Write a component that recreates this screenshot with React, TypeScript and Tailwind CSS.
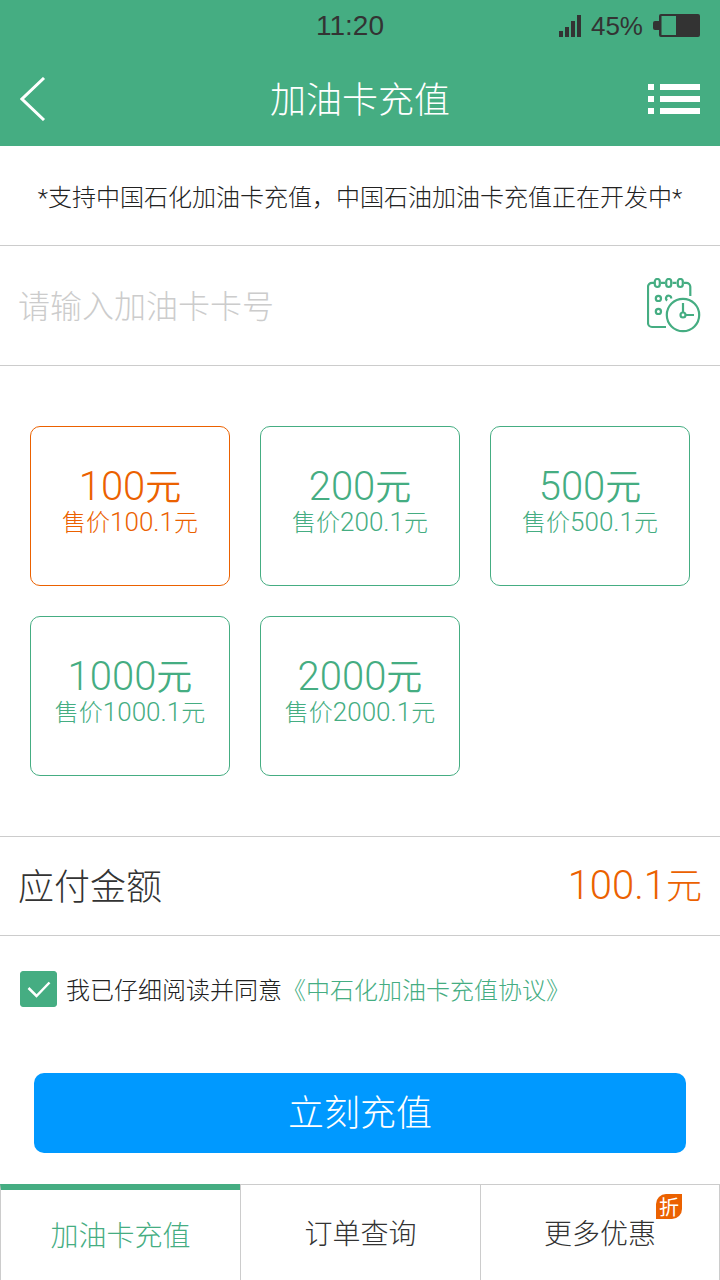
import { useState } from 'react'
import clsx from 'clsx'

const amounts = [100, 200, 500, 1000, 2000]

const tabs = [
  { id: 'recharge', label: '加油卡充值' },
  { id: 'orders', label: '订单查询' },
  { id: 'offers', label: '更多优惠', badge: '折' },
]

function StatusBar() {
  return (
    <div className="grid h-[51px] grid-cols-3 items-center pr-5 font-['Liberation_Sans',sans-serif] text-[28px] leading-8 text-[#333]">
      <span className="col-start-2 text-center">11:20</span>
      <div className="flex items-center justify-end gap-[10px]">
        <svg width="22" height="22" viewBox="0 0 22 22" fill="currentColor" aria-hidden="true">
          <path d="M0 16h4v6H0zM6 12h4v10H6zM12 6h4v16h-4zM18 0h4v22h-4z" />
        </svg>
        <span className="text-[26px]">45%</span>
        <svg width="47" height="23" viewBox="0 0 47 23" fill="currentColor" aria-hidden="true">
          <path d="M2 7h4v9H2a2 2 0 0 1-2-2V9a2 2 0 0 1 2-2z" />
          <path
            fillRule="evenodd"
            d="M8 0h37a2 2 0 0 1 2 2v19a2 2 0 0 1-2 2H8a2 2 0 0 1-2-2V2a2 2 0 0 1 2-2zm.5 2v19H23V2z"
          />
        </svg>
      </div>
    </div>
  )
}

function CalendarClockIcon() {
  return (
    <svg width="55" height="56" viewBox="0 0 55 56" fill="none" stroke="currentColor" strokeWidth="2.2" aria-hidden="true">
      <path d="M7 4.800H5a4 4 0 0 0-4 4V45a4 4 0 0 0 4 4h14M14 4.800h4M25.500 4.800h4M37 4.800h2.300a4 4 0 0 1 4 4V18" />
      <rect x="7.800" y="1" width="5" height="8" rx="2.500" />
      <rect x="19.200" y="1" width="5" height="8" rx="2.500" />
      <rect x="30.800" y="1" width="5" height="8" rx="2.500" />
      <circle cx="11.400" cy="20.400" r="2.600" />
      <circle cx="11.400" cy="33.400" r="2.600" />
      <path d="M20.200 22.500a2.600 2.600 0 1 1 4-2" />
      <circle cx="36" cy="37" r="16.200" />
      <circle cx="36" cy="37" r="2.500" />
      <path d="M36 34.500V25M38.500 37H47" />
    </svg>
  )
}

export default function App() {
  const [cardNo, setCardNo] = useState('')
  const [amount, setAmount] = useState(100)
  const [agreed, setAgreed] = useState(true)
  const [tab, setTab] = useState('recharge')

  return (
    <div className="flex min-h-screen flex-col bg-white font-[Roboto,'Noto_Sans_CJK_SC',sans-serif] font-light text-[#333]">
      <header className="bg-[#45ad82] text-white">
        <StatusBar />
        <div className="flex h-[95px] items-center justify-between px-5">
          <button type="button" aria-label="返回" className="w-13">
            <svg width="26" height="44" viewBox="0 0 26 44" fill="none" stroke="currentColor" strokeWidth="3" aria-hidden="true">
              <path d="M24 1 2 22l22 21" />
            </svg>
          </button>
          <h1 className="pt-1 text-[36px] leading-10">加油卡充值</h1>
          <button type="button" aria-label="菜单">
            <svg width="52" height="30" viewBox="0 0 52 30" fill="currentColor" aria-hidden="true">
              <path d="M0 0h6v6H0zM12 0h40v6H12zM0 12h6v6H0zM12 12h40v6H12zM0 24h6v6H0zM12 24h40v6H12z" />
            </svg>
          </button>
        </div>
      </header>

      <main className="flex-1">
        <p className="border-b border-[#ccc] pt-[35px] pb-[29px] text-center text-[24px] leading-[35px] text-[#222]">
          *支持中国石化加油卡充值，中国石油加油卡充值正在开发中*
        </p>

        <div className="flex h-[120px] items-center justify-between border-b border-[#ccc] px-[18px]">
          <input
            type="text"
            inputMode="numeric"
            aria-label="加油卡卡号"
            placeholder="请输入加油卡卡号"
            value={cardNo}
            onChange={(e) => setCardNo(e.target.value)}
            className="min-w-0 flex-1 pt-0.5 text-[32px] leading-10 outline-none placeholder:text-[#ccc]"
          />
          <button type="button" aria-label="历史记录" className="text-[#45ad82]">
            <CalendarClockIcon />
          </button>
        </div>

        <div className="grid grid-cols-3 gap-[30px] px-[30px] py-[60px]">
          {amounts.map((value) => (
            <button
              key={value}
              type="button"
              aria-pressed={amount === value}
              onClick={() => setAmount(value)}
              className={clsx(
                'flex h-40 flex-col items-center rounded-[10px] border pt-10',
                amount === value ? 'border-[#eb6100] text-[#eb6100]' : 'border-[#45ad82] text-[#45ad82]',
              )}
            >
              <span className="text-[36px] leading-10 font-[350]">
                <span className="text-[40px]">{value}</span>元
              </span>
              <span className="text-[24px] leading-7">
                售价<span className="text-[26px]">{value}.1</span>元
              </span>
            </button>
          ))}
        </div>

        <div className="flex h-[100px] items-center justify-between border-y border-[#ccc] px-[18px] text-[36px] leading-10">
          <span className="pt-1">应付金额</span>
          <span className="text-[#eb6100]">
            <span className="text-[40px]">{amount}.1</span>元
          </span>
        </div>

        <div className="flex items-center gap-[9px] px-5 pt-[35px] text-[24px] leading-8">
          <span className="relative flex">
            <input
              id="agree"
              type="checkbox"
              checked={agreed}
              onChange={(e) => setAgreed(e.target.checked)}
              className="peer h-9 w-[37px] appearance-none rounded-[3px] border border-[#45ad82] checked:bg-[#45ad82]"
            />
            <svg
              width="37"
              height="36"
              viewBox="0 0 37 36"
              fill="none"
              stroke="#fff"
              strokeWidth="2.5"
              className="pointer-events-none invisible absolute inset-0 peer-checked:visible"
              aria-hidden="true"
            >
              <path d="m8.500 17 8 8L29.500 11.500" />
            </svg>
          </span>
          <div className="pt-1">
            <label htmlFor="agree" className="text-[#222]">
              我已仔细阅读并同意
            </label>
            <a href="#agreement" className="text-[#45ad82]">
              《中石化加油卡充值协议》
            </a>
          </div>
        </div>

        <div className="px-[34px] pt-[66px] pb-[31px]">
          <button
            type="button"
            disabled={!agreed}
            className="h-20 w-full rounded-[10px] bg-[#0099ff] pt-0.5 text-[36px] leading-10 text-white"
          >
            立刻充值
          </button>
        </div>
      </main>

      <nav className="grid h-24 grid-cols-3">
        {tabs.map((item) => (
          <button
            key={item.id}
            type="button"
            onClick={() => setTab(item.id)}
            className={clsx(
              'flex items-center justify-center border-l border-[#ccc] pt-1 text-[28px] leading-8 last:border-r',
              tab === item.id ? 'border-t-6 border-t-[#45ad82] text-[#45ad82]' : 'border-t',
            )}
          >
            <span className="relative">
              {item.label}
              {item.badge && (
                <span className="absolute bottom-full left-full flex h-[25px] w-[26px] items-center justify-center rounded-tl-[10px] rounded-br-[10px] bg-[#eb6100] pt-1 text-[20px] leading-6 font-normal text-white">
                  {item.badge}
                </span>
              )}
            </span>
          </button>
        ))}
      </nav>
    </div>
  )
}
